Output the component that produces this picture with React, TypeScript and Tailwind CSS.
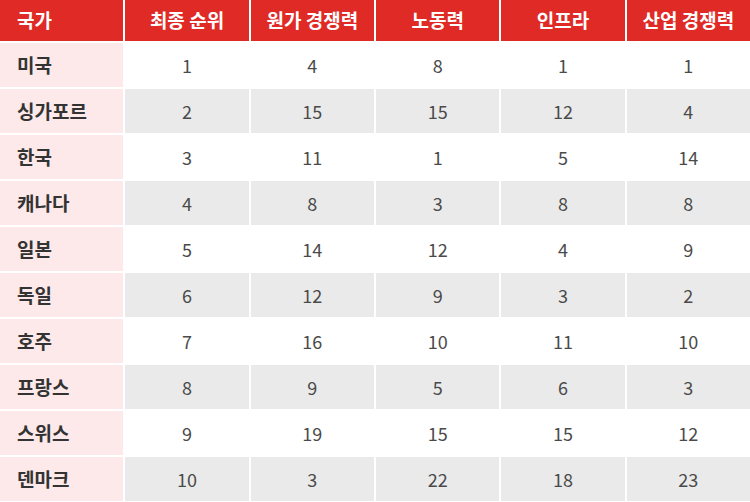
const headers = ['국가', '최종 순위', '원가 경쟁력', '노동력', '인프라', '산업 경쟁력'];

const rows: [string, number[]][] = [
  ['미국', [1, 4, 8, 1, 1]],
  ['싱가포르', [2, 15, 15, 12, 4]],
  ['한국', [3, 11, 1, 5, 14]],
  ['캐나다', [4, 8, 3, 8, 8]],
  ['일본', [5, 14, 12, 4, 9]],
  ['독일', [6, 12, 9, 3, 2]],
  ['호주', [7, 16, 10, 11, 10]],
  ['프랑스', [8, 9, 5, 6, 3]],
  ['스위스', [9, 19, 15, 15, 12]],
  ['덴마크', [10, 3, 22, 18, 23]],
];

export default function App() {
  return (
    <div
      className="w-[750px] h-[502px] bg-white overflow-hidden"
      style={{ fontFamily: '"Noto Sans CJK KR", "Noto Sans", sans-serif' }}
    >
      <div className="grid grid-cols-6 gap-[2px]">
        {headers.map((h, i) => (
          <div
            key={h}
            className={`h-[41px] bg-[#df2a26] text-white font-bold text-[19px] flex items-center ${
              i === 0 ? 'pl-[17px]' : 'justify-center'
            }`}
          >
            {h}
          </div>
        ))}
        {rows.map(([name, vals], r) => (
          <>
            <div
              key={name}
              className="h-[44px] bg-[#fde9e9] flex items-center pl-[17px] text-[19px] font-bold text-[#333]"
            >
              {name}
            </div>
            {vals.map((v, c) => (
              <div
                key={name + c}
                className={`h-[44px] flex items-center justify-center text-[18px] text-[#4a4a4a] ${
                  r % 2 === 1 ? 'bg-[#eaeaea]' : 'bg-white'
                }`}
              >
                {v}
              </div>
            ))}
          </>
        ))}
      </div>
    </div>
  );
}
